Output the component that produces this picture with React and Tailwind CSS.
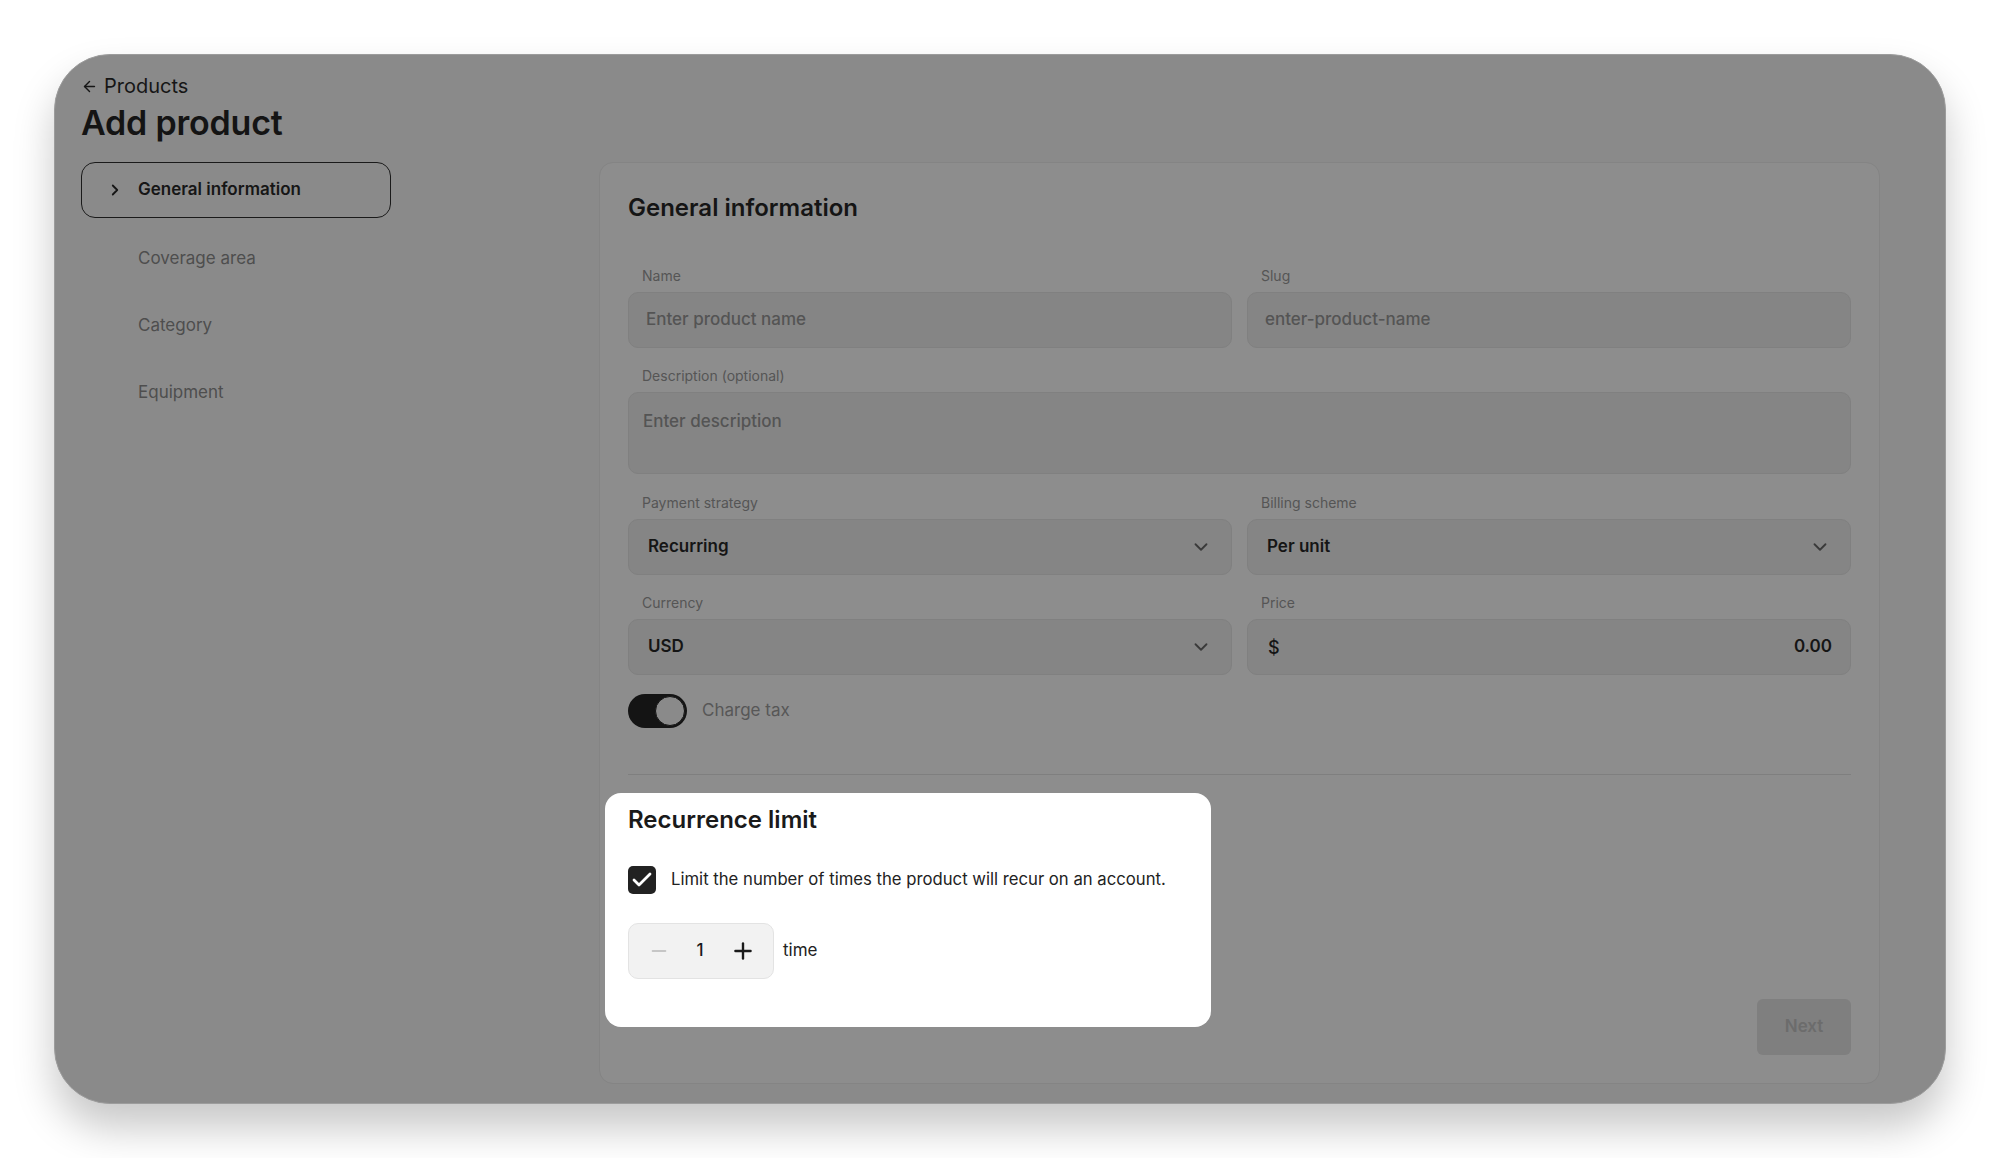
import { ArrowLeft, ChevronRight, ChevronDown, Check, Minus, Plus } from "lucide-react";

function Field({ label, children }) {
  return (
    <div className="flex flex-col">
      <span className="pl-[14px] text-[14px] leading-5 text-[#555555]">{label}</span>
      <div className="mt-[6px]">{children}</div>
    </div>
  );
}

function Select({ value }) {
  return (
    <div className="flex h-[56px] items-center justify-between rounded-[10px] border border-[#808080] bg-[#858585] pl-[19px] pr-[19px]">
      <span className="text-[17px] font-semibold text-[#151515]">{value}</span>
      <ChevronDown size={22} strokeWidth={2} className="text-[#3a3a3a]" />
    </div>
  );
}

function App() {
  const steps = ["Coverage area", "Category", "Equipment"];

  return (
    <div className="min-h-screen bg-white p-[54px] font-['Inter',sans-serif]">
      <div className="flex h-[1050px] flex-col rounded-[56px] border border-[#9c9c9c] bg-[#8a8a8a] pb-[19px] pl-[26px] pr-[65px] pt-[19px] shadow-[0_24px_40px_rgba(0,0,0,0.22)]">
        {/* header */}
        <div className="flex items-center gap-[6px] text-[20px] leading-6 text-[#161616]">
          <ArrowLeft size={17} strokeWidth={2} />
          <span>Products</span>
        </div>
        <h1 className="mt-[3px] text-[34px] font-semibold leading-[44px] tracking-[-0.2px] text-[#141414]">
          Add product
        </h1>

        <div className="mt-[17px] flex flex-1 gap-[208px]">
          {/* sidebar */}
          <div className="flex w-[310px] shrink-0 flex-col">
            <div className="flex h-[56px] items-center gap-[14px] rounded-[14px] border-[1.5px] border-[#1a1a1a] pl-[24px]">
              <ChevronRight size={18} strokeWidth={2.4} className="text-[#161616]" />
              <span className="text-[17px] font-semibold text-[#161616]">General information</span>
            </div>
            <div className="mt-[7px] flex flex-col">
              {steps.map((s) => (
                <div key={s} className="flex h-[67px] items-center pl-[57px] text-[17px] text-[#4e4e4e]">
                  {s}
                </div>
              ))}
            </div>
          </div>

          {/* main card */}
          <div className="relative flex w-[1282px] flex-col rounded-[14px] border border-[#848484] bg-[#8d8d8d] px-[28px] pb-[28px] pt-[29px]">
            <h2 className="text-[24px] font-semibold leading-8 text-[#151515]">General information</h2>

            <div className="mt-[42px] grid grid-cols-2 gap-x-[15px]">
              <Field label="Name">
                <div className="flex h-[56px] items-center rounded-[10px] border border-[#808080] bg-[#858585] px-[17px] text-[17px] font-medium text-[#545454]">
                  Enter product name
                </div>
              </Field>
              <Field label="Slug">
                <div className="flex h-[56px] items-center rounded-[10px] border border-[#808080] bg-[#858585] px-[17px] text-[17px] font-medium text-[#545454]">
                  enter-product-name
                </div>
              </Field>
            </div>

            <div className="mt-[18px]">
              <Field label="Description (optional)">
                <div className="h-[82px] rounded-[10px] border border-[#808080] bg-[#858585] px-[14px] pt-[16px] text-[17px] font-medium leading-6 text-[#545454]">
                  Enter description
                </div>
              </Field>
            </div>

            <div className="mt-[19px] grid grid-cols-2 gap-x-[15px] gap-y-[18px]">
              <Field label="Payment strategy">
                <Select value="Recurring" />
              </Field>
              <Field label="Billing scheme">
                <Select value="Per unit" />
              </Field>
              <Field label="Currency">
                <Select value="USD" />
              </Field>
              <Field label="Price">
                <div className="flex h-[56px] items-center justify-between rounded-[10px] border border-[#808080] bg-[#858585] pl-[20px] pr-[18px]">
                  <span className="text-[18px] font-medium text-[#151515]">$</span>
                  <span className="text-[17px] font-semibold text-[#151515]">0.00</span>
                </div>
              </Field>
            </div>

            <div className="mt-[19px] flex items-center gap-[15px]">
              <div className="flex h-[34px] w-[59px] items-center justify-end rounded-full bg-[#141414] p-[2px]">
                <div className="h-[30px] w-[30px] rounded-full border-[1.5px] border-[#141414] bg-[#8a8a8a]" />
              </div>
              <span className="text-[17px] text-[#575757]">Charge tax</span>
            </div>

            <div className="mt-[46px] h-px bg-[#7f7f7f]" />

            <div className="mt-auto flex justify-end">
              <button className="h-[56px] w-[94px] rounded-[6px] bg-[#7f7f7f] text-[17px] font-semibold text-[#6c6c6c]">
                Next
              </button>
            </div>

            {/* highlighted section */}
            <div className="absolute left-[5px] top-[630px] w-[606px] rounded-[16px] bg-white pb-[48px] pl-[23px] pr-[20px] pt-[11px]">
              <h3 className="text-[24px] font-semibold leading-8 text-[#1a1a1a]">Recurrence limit</h3>
              <label className="mt-[30px] flex items-center gap-[15px]">
                <span className="flex h-[28px] w-[28px] items-center justify-center rounded-[5px] bg-[#222222]">
                  <Check size={24} strokeWidth={2.8} className="text-white" />
                </span>
                <span className="text-[16.7px] text-[#222222]">
                  Limit the number of times the product will recur on an account.
                </span>
              </label>
              <div className="mt-[29px] flex items-center gap-[9px]">
                <div className="flex h-[56px] w-[146px] items-center justify-between rounded-[10px] border border-[#e3e3e3] bg-[#f2f2f2] pl-[19px] pr-[17px]">
                  <Minus size={22} strokeWidth={2} className="text-[#c6c6c6]" />
                  <span className="text-[17px] font-medium text-[#1a1a1a]">1</span>
                  <Plus size={26} strokeWidth={2.2} className="text-[#1a1a1a]" />
                </div>
                <span className="text-[17px] text-[#222222]">time</span>
              </div>
            </div>
          </div>
        </div>
      </div>
    </div>
  );
}

export default App;
